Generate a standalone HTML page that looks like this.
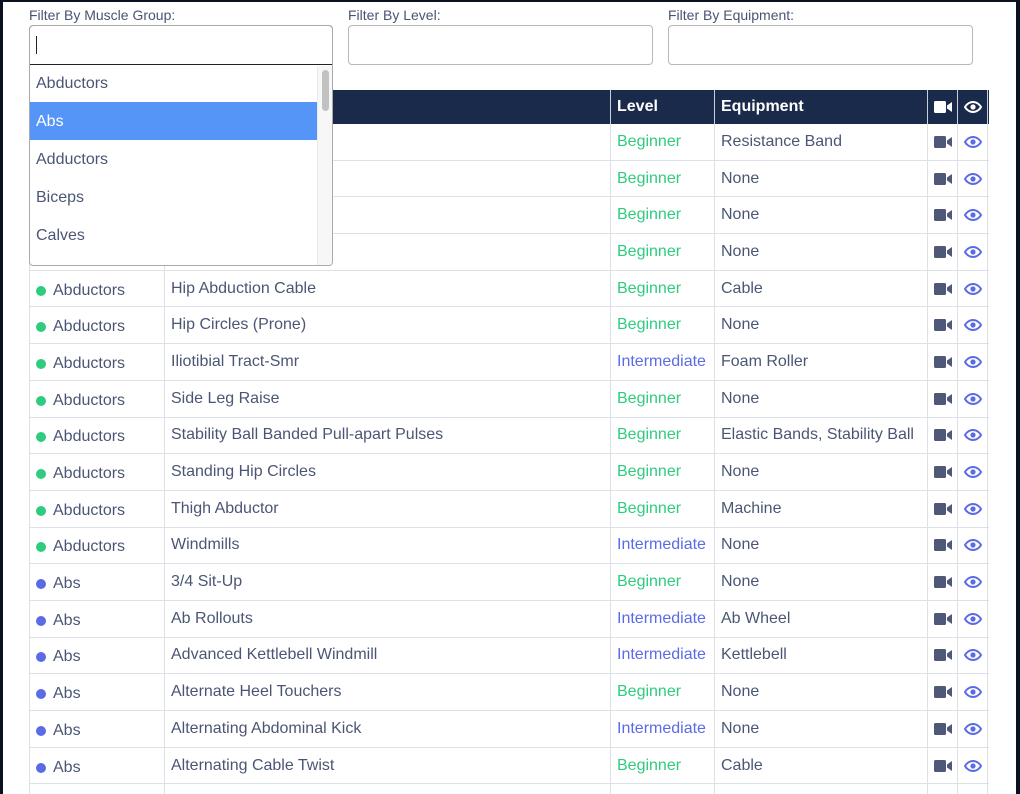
<!DOCTYPE html>
<html style="width:1020px;height:794px;overflow:hidden"><head><meta charset="utf-8"><style>
*{box-sizing:border-box;margin:0;padding:0}
body{width:1020px;height:794px;background:#0b1120;position:relative;overflow:hidden;font-family:"Liberation Sans",Arial,sans-serif}
.page{position:absolute;left:3px;top:2px;width:1013px;height:792px;background:#fff;overflow:hidden}
.lbl{position:absolute;top:5px;font-size:14px;color:#4a5470}
.inp{position:absolute;top:23px;height:40px;border:1px solid #b8b8b8;border-radius:4px;background:#fff}
.tbl{position:absolute;left:26px;top:88px;width:960px}
.hdr{height:34px;background:#1a2a4a;color:#fff;font-weight:bold;font-size:16px;display:flex}
.row{height:36.7px;display:flex;border-bottom:1px solid #dde0e6;font-size:16px;color:#4b5675}
.c{border-right:1px solid #dde0e6;display:flex;align-items:center;padding-left:6px;white-space:nowrap;overflow:hidden}
.hdr .c{border-right:1px solid #c9cfdb}
.c1{width:136px;border-left:1px solid #dde0e6}.c2{width:446px}.c3{width:104px}.c4{width:213px}.c5{width:30px;justify-content:center;padding:0}.c6{width:30px;justify-content:center;padding:0}
.hdr .c1{border-left:none}
.row .c1{padding-top:4px}
.dot{width:10px;height:10px;border-radius:50%;display:inline-block;margin-right:7px}
.g{background:#2ecc7f}.b{background:#5b6be6}
.beg{color:#2ecc7f}.int{color:#5b6be6}
.dd{position:absolute;left:26px;top:23px;width:304px;height:241px;border:1px solid #aaa;border-radius:4px;background:#fff;overflow:hidden}
.dd .in{height:40px;border:1px solid #222;border-radius:4px 4px 0 0;margin:-1px;position:relative}
.dd .in:after{content:"";position:absolute;left:6px;top:10px;width:1px;height:18px;background:#222}
.opt{height:38px;line-height:40px;padding-left:6px;font-size:16px;color:#4b5675;width:288px}
.opt.sel{background:#5595f7;color:#fff}
.sb{position:absolute;right:0;top:40px;width:15px;bottom:0;background:#f7f7f7;border-left:1px solid #eaeaea}
.sb i{position:absolute;left:4px;top:4px;width:7px;height:41px;background:#c1c1c1;border-radius:4px}
</style></head><body><div class="page">
<div class="lbl" style="left:26px">Filter By Muscle Group:</div>
<div class="lbl" style="left:345px">Filter By Level:</div>
<div class="lbl" style="left:665px">Filter By Equipment:</div>
<div class="inp" style="left:345px;width:305px"></div>
<div class="inp" style="left:665px;width:305px"></div>

<div class="tbl">
<div class="hdr"><div class="c c1"></div><div class="c c2"></div><div class="c c3">Level</div><div class="c c4">Equipment</div>
<div class="c c5"><svg width="18" height="12" viewBox="0 0 18 12"><rect x="0" y="0" width="12" height="12" rx="1.5" fill="#fff"/><path d="M13 4.5L18 1v10l-5-3.5z" fill="#fff"/></svg></div>
<div class="c c6"><svg width="18" height="12" viewBox="0 0 18 12"><path d="M9 1C5 1 2 4 1 6c1 2 4 5 8 5s7-3 8-5c-1-2-4-5-8-5z" fill="none" stroke="#fff" stroke-width="2"/><circle cx="9" cy="6" r="2.6" fill="#fff"/></svg></div></div>
</div>

<div class="tbl" id="rows" style="top:122px">
<div class="row"><div class="c c1"><span class="dot g"></span>Abductors</div><div class="c c2"></div><div class="c c3 beg">Beginner</div><div class="c c4">Resistance Band</div><div class="c c5"></div><div class="c c6"></div></div>
<div class="row"><div class="c c1"><span class="dot g"></span>Abductors</div><div class="c c2"></div><div class="c c3 beg">Beginner</div><div class="c c4">None</div><div class="c c5"></div><div class="c c6"></div></div>
<div class="row"><div class="c c1"><span class="dot g"></span>Abductors</div><div class="c c2"></div><div class="c c3 beg">Beginner</div><div class="c c4">None</div><div class="c c5"></div><div class="c c6"></div></div>
<div class="row"><div class="c c1"><span class="dot g"></span>Abductors</div><div class="c c2"></div><div class="c c3 beg">Beginner</div><div class="c c4">None</div><div class="c c5"></div><div class="c c6"></div></div>
<div class="row"><div class="c c1"><span class="dot g"></span>Abductors</div><div class="c c2">Hip Abduction Cable</div><div class="c c3 beg">Beginner</div><div class="c c4">Cable</div><div class="c c5"></div><div class="c c6"></div></div>
<div class="row"><div class="c c1"><span class="dot g"></span>Abductors</div><div class="c c2">Hip Circles (Prone)</div><div class="c c3 beg">Beginner</div><div class="c c4">None</div><div class="c c5"></div><div class="c c6"></div></div>
<div class="row"><div class="c c1"><span class="dot g"></span>Abductors</div><div class="c c2">Iliotibial Tract-Smr</div><div class="c c3 int">Intermediate</div><div class="c c4">Foam Roller</div><div class="c c5"></div><div class="c c6"></div></div>
<div class="row"><div class="c c1"><span class="dot g"></span>Abductors</div><div class="c c2">Side Leg Raise</div><div class="c c3 beg">Beginner</div><div class="c c4">None</div><div class="c c5"></div><div class="c c6"></div></div>
<div class="row"><div class="c c1"><span class="dot g"></span>Abductors</div><div class="c c2">Stability Ball Banded Pull-apart Pulses</div><div class="c c3 beg">Beginner</div><div class="c c4">Elastic Bands, Stability Ball</div><div class="c c5"></div><div class="c c6"></div></div>
<div class="row"><div class="c c1"><span class="dot g"></span>Abductors</div><div class="c c2">Standing Hip Circles</div><div class="c c3 beg">Beginner</div><div class="c c4">None</div><div class="c c5"></div><div class="c c6"></div></div>
<div class="row"><div class="c c1"><span class="dot g"></span>Abductors</div><div class="c c2">Thigh Abductor</div><div class="c c3 beg">Beginner</div><div class="c c4">Machine</div><div class="c c5"></div><div class="c c6"></div></div>
<div class="row"><div class="c c1"><span class="dot g"></span>Abductors</div><div class="c c2">Windmills</div><div class="c c3 int">Intermediate</div><div class="c c4">None</div><div class="c c5"></div><div class="c c6"></div></div>
<div class="row"><div class="c c1"><span class="dot b"></span>Abs</div><div class="c c2">3/4 Sit-Up</div><div class="c c3 beg">Beginner</div><div class="c c4">None</div><div class="c c5"></div><div class="c c6"></div></div>
<div class="row"><div class="c c1"><span class="dot b"></span>Abs</div><div class="c c2">Ab Rollouts</div><div class="c c3 int">Intermediate</div><div class="c c4">Ab Wheel</div><div class="c c5"></div><div class="c c6"></div></div>
<div class="row"><div class="c c1"><span class="dot b"></span>Abs</div><div class="c c2">Advanced Kettlebell Windmill</div><div class="c c3 int">Intermediate</div><div class="c c4">Kettlebell</div><div class="c c5"></div><div class="c c6"></div></div>
<div class="row"><div class="c c1"><span class="dot b"></span>Abs</div><div class="c c2">Alternate Heel Touchers</div><div class="c c3 beg">Beginner</div><div class="c c4">None</div><div class="c c5"></div><div class="c c6"></div></div>
<div class="row"><div class="c c1"><span class="dot b"></span>Abs</div><div class="c c2">Alternating Abdominal Kick</div><div class="c c3 int">Intermediate</div><div class="c c4">None</div><div class="c c5"></div><div class="c c6"></div></div>
<div class="row"><div class="c c1"><span class="dot b"></span>Abs</div><div class="c c2">Alternating Cable Twist</div><div class="c c3 beg">Beginner</div><div class="c c4">Cable</div><div class="c c5"></div><div class="c c6"></div></div>
<div class="row"><div class="c c1"></div><div class="c c2"></div><div class="c c3"></div><div class="c c4"></div><div class="c c5 x"></div><div class="c c6 x"></div></div>
</div>

<div class="dd"><div class="in"></div>
<div class="opt">Abductors</div><div class="opt sel">Abs</div><div class="opt">Adductors</div><div class="opt">Biceps</div><div class="opt">Calves</div>
<div class="sb"><i></i></div></div>
</div>
<svg width="0" height="0" style="position:absolute"><defs>
<symbol id="vid" viewBox="0 0 18 12"><rect x="0" y="0" width="12" height="12" rx="1.5" fill="#4f5879"/><path d="M13 4.5L18 1v10l-5-3.5z" fill="#4f5879"/></symbol>
<symbol id="eye" viewBox="0 0 18 12"><path d="M9 1C5 1 2 4 1 6c1 2 4 5 8 5s7-3 8-5c-1-2-4-5-8-5z" fill="none" stroke="#5b6be6" stroke-width="2"/><circle cx="9" cy="6" r="2.6" fill="#5b6be6"/></symbol>
</defs></svg>
<script>
document.querySelectorAll('#rows .row').forEach(function(r,i){if(i>17)return;
r.querySelector('.c5').innerHTML='<svg width="18" height="12"><use href="#vid"/></svg>';
r.querySelector('.c6').innerHTML='<svg width="18" height="12"><use href="#eye"/></svg>';});
</script>
</body></html>
